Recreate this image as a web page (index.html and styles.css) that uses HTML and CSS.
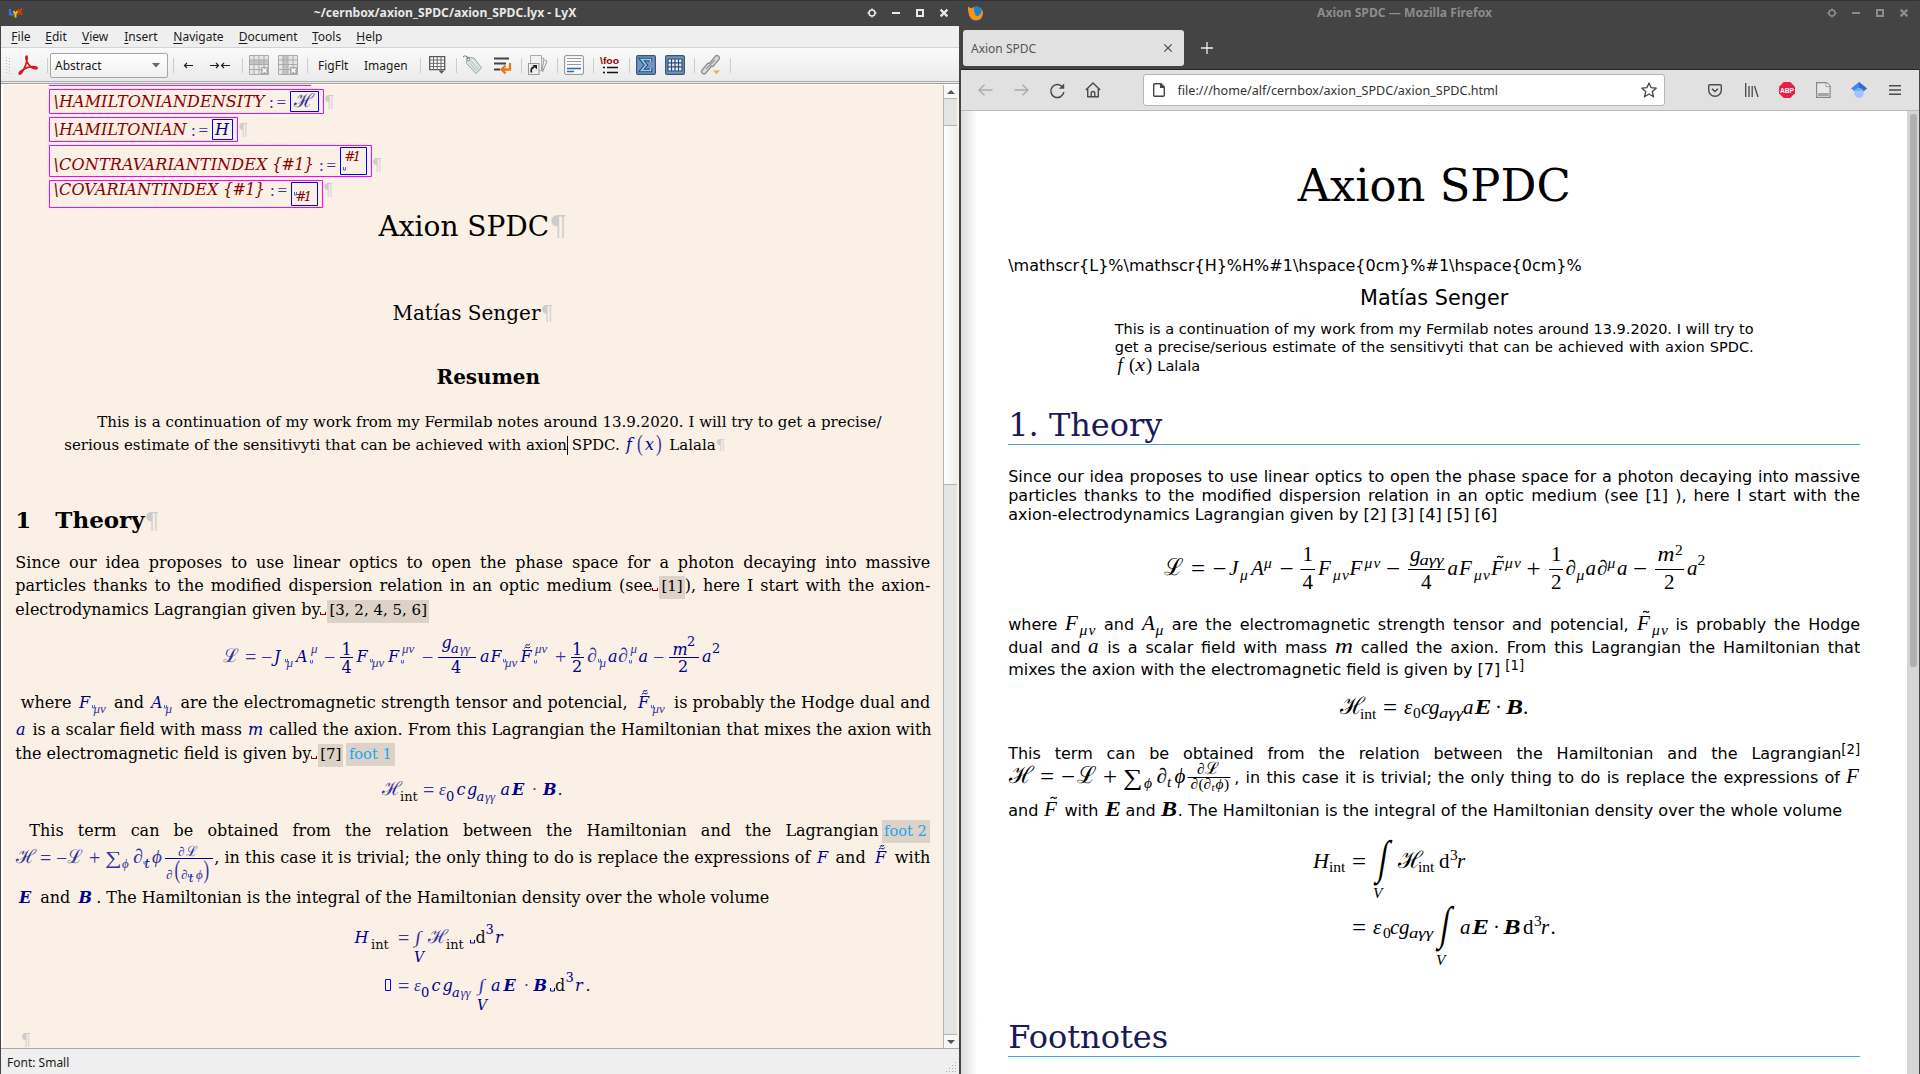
FILE: index.html
```html
<!DOCTYPE html>
<html lang="en">
<head>
<meta charset="utf-8">
<title>Axion SPDC</title>
<link rel="stylesheet" href="styles.css">
</head>
<body>
<svg class="defs" width="0" height="0">
  <symbol id="u" overflow="visible"><path d="M.5 0v3h2v-3" fill="none" stroke="#4169e1"/></symbol>
  <symbol id="sp" overflow="visible"><path d="M.5 0v3h4v-3" fill="none" stroke="#00008b"/></symbol>
  <symbol id="tl" overflow="visible"><path d="M.3 4.800q1.400-2 3-.8t3-.8M1.500 2.300q.8-2 2-.9t2.200-1" fill="none" stroke="#00008b"/></symbol>
  <symbol id="winbtns" viewBox="0 0 84 12">
    <circle cx="6" cy="6" r="3" fill="none" stroke="currentColor" stroke-width="1.6"/>
    <path d="M6 1.500v1M6 9.500v1M1.500 6h1M9.500 6h1" stroke="currentColor" stroke-width="1.6"/>
    <path d="M26 6h8" stroke="currentColor" stroke-width="2"/>
    <rect x="51" y="3" width="6" height="6" fill="none" stroke="currentColor" stroke-width="2"/>
    <path d="M74.600 2.600l6.800 6.800M81.400 2.600l-6.800 6.800" stroke="currentColor" stroke-width="2.2"/>
  </symbol>
</svg>

<section class="win lyx">
  <header class="titlebar">
    <svg width="14" height="10" viewBox="0 0 14 10"><path d="M1 1v5.500h4" fill="none" stroke="#2a7de1" stroke-width="2.200"/><path d="M4.500 3l2 3 2-3M6.500 6v3.500" fill="none" stroke="#f5c400" stroke-width="2"/><path d="M9 1l4 6M13 .5l-4 6.500" stroke="#c8400a" stroke-width="2"/></svg>
    <span class="wtitle">~/cernbox/axion_SPDC/axion_SPDC.lyx - LyX</span>
    <svg class="btns" width="84" height="12"><use href="#winbtns"/></svg>
  </header>
  <nav class="menubar">
    <span><u>F</u>ile</span><span><u>E</u>dit</span><span><u>V</u>iew</span><span><u>I</u>nsert</span><span><u>N</u>avigate</span><span><u>D</u>ocument</span><span><u>T</u>ools</span><span><u>H</u>elp</span>
  </nav>
  <div class="toolbar">
    <svg width="5" height="17" viewBox="0 0 5 17"><path d="M.5 0v17M3.500 1v16" stroke="#b5b5b5" stroke-dasharray="1 2"/></svg>
    <svg width="20" height="20" viewBox="0 0 20 20"><path d="M8.600 1c-1.400.4-.6 4 .6 6.200 1.600 3.200 5 6.400 8.600 6.600 1.800.1 1.800-1.500-.2-1.900-4-.8-9.400.7-13 3C2 16.400.6 18.500 1.400 19c1.400.6 4-3.600 5.800-7.800C8.600 8 10 1.200 8.600 1z" fill="none" stroke="#d9161c" stroke-width="1.700"/></svg>
    <i class="sep"></i>
    <div class="combo"><span>Abstract</span><svg width="8" height="5" viewBox="0 0 8 5"><path d="M0 0h8l-4 4.500z" fill="#666"/></svg></div>
    <i class="sep"></i>
    <svg width="10" height="8" viewBox="0 0 10 8"><path d="M10 4.500H2M4 2L1.500 4.500 4 7" fill="none" stroke="#222" stroke-width="1.200"/></svg>
    <svg width="20" height="8" viewBox="0 0 20 8"><path d="M0 4.500h8M6 2L8.500 4.500 6 7M20 4.500h-8M14 2L11.500 4.500 14 7" fill="none" stroke="#222" stroke-width="1.200"/></svg>
    <i class="sep"></i>
    <svg width="20" height="20" viewBox="0 0 20 20"><path d="M.5 .5h19v19H.5z" fill="#e6e6e6" stroke="#aaa"/><path d="M1 5h18v4H1z" fill="#c4c4c4"/><path d="M0 5h20M0 9.500h20M0 14.500h20M5 0v20M10 0v20M15 0v20" stroke="#aaa"/><rect x="12" y="12" width="7" height="7" fill="#aaa"/><path d="M13.500 13.500l4 4M17.500 13.500l-4 4" stroke="#fff" stroke-width="1.500"/></svg>
    <svg width="20" height="20" viewBox="0 0 20 20"><path d="M.5 .5h19v19H.5z" fill="#e6e6e6" stroke="#aaa"/><path d="M5 1h5v18H5z" fill="#c4c4c4"/><path d="M0 5h20M0 9.500h20M0 14.500h20M5 0v20M10 0v20M15 0v20" stroke="#aaa"/><rect x="12" y="12" width="7" height="7" fill="#aaa"/><path d="M13.500 13.500l4 4M17.500 13.500l-4 4" stroke="#fff" stroke-width="1.500"/></svg>
    <i class="sep"></i>
    <span>FigFlt</span>
    <span>Imagen</span>
    <i class="sep"></i>
    <svg width="17" height="18" viewBox="0 0 17 18"><path d="M.7 .7h15v13H.7z" fill="#fff" stroke="#555" stroke-width="1.300"/><path d="M0 4h16M0 7.300h16M0 10.600h16M4.500 0v14M8.200 0v14M12 0v14" stroke="#666"/><path d="M9.500 14.500h6l-3 3.200z" fill="#555"/></svg>
    <i class="sep"></i>
    <svg width="20" height="20" viewBox="0 0 20 20"><path d="M4 2l7 1 7.500 10-5.500 5.500L3.500 8.500z" fill="#dfe5e5" stroke="#98a3a6"/><path d="M8 6l8 9M6.500 8l7 8" stroke="#a9bcc4"/><circle cx="5.500" cy="4.500" r="1.300" fill="#fff" stroke="#777"/><path d="M0 2q3-3 5.500 2" fill="none" stroke="#777"/></svg>
    <svg width="20" height="20" viewBox="0 0 20 20"><path d="M1 3.500h15M1 8.500h12M1 14.500h6" stroke="#444" stroke-width="2.200"/><path d="M17 8v6.500H9M12.500 10.500L8.500 14.500l4 3.800" fill="none" stroke="#e07b16" stroke-width="2.300"/></svg>
    <i class="sep"></i>
    <svg width="20" height="20" viewBox="0 0 20 20"><path d="M2.500 .5h11v15h-11z" fill="#f2f2f2" stroke="#aaa"/><path d="M14 3l2 .5-2 13M16.500 5l2.500 1-4.500 11" fill="none" stroke="#999"/><rect x=".5" y="8.500" width="10.500" height="11" fill="#eee" stroke="#999"/><path d="M3.500 17.500q-1.500-4.500 3-5.500" fill="none" stroke="#222" stroke-width="1.800"/><path d="M4.500 10h4.500v4.500z" fill="#222"/></svg>
    <i class="sep"></i>
    <svg width="20" height="20" viewBox="0 0 20 20"><rect x=".6" y=".6" width="18.800" height="18.800" rx="1.500" fill="#fbfbfb" stroke="#8d8d8d"/><path d="M3 3.500h14M3 6.500h14M3 9.500h14" stroke="#999" stroke-width="1.200"/><path d="M3 13.500h14M3 16.500h7" stroke="#3465a4" stroke-width="1.500"/></svg>
    <i class="sep"></i>
    <svg width="20" height="20" viewBox="0 0 20 20"><text x="0" y="8.500" class="foo" textLength="19" lengthAdjust="spacingAndGlyphs">\foo</text><path d="M3 12.500h2M3 17.500h2M7 12.500h11M7 17.500h11" stroke="#111" stroke-width="1.600"/></svg>
    <i class="sep"></i>
    <svg width="20" height="20" viewBox="0 0 20 20"><rect x=".6" y=".6" width="18.800" height="18.800" rx="1.500" fill="#7395bb" stroke="#34557c" stroke-width="1.200"/><path d="M14.500 7V4.500h-9L10 10l-4.500 5.500h9V13" fill="none" stroke="#234a78" stroke-width="3.600"/><path d="M14.500 7V4.500h-9L10 10l-4.500 5.500h9V13" fill="none" stroke="#8fd0f5" stroke-width="1.600"/></svg>
    <svg width="20" height="20" viewBox="0 0 20 20"><rect x=".6" y=".6" width="18.800" height="18.800" rx="1.500" fill="#7395bb" stroke="#34557c" stroke-width="1.200"/><path d="M3 4h14v12H3z" fill="#e8eef6" stroke="#2c4b7c" stroke-width="1.200"/><path d="M3 7.800h14M3 11.800h14M6.500 4v12M10 4v12M13.500 4v12" stroke="#2c4b7c" stroke-width="1.200"/></svg>
    <i class="sep"></i>
    <svg width="20" height="20" viewBox="0 0 20 20"><path d="M3 16.500l5-6M11 9l5-6" stroke="#8f8f8f" stroke-width="6" stroke-linecap="round"/><path d="M3 16.500l5-6M11 9l5-6" stroke="#dcdcdc" stroke-width="3.500" stroke-linecap="round"/><path d="M5 14l9-9" stroke="#999" stroke-width="1.300"/><path d="M12 15.500h7l-3.500 3.800z" fill="#f2a95c"/></svg>
    <i class="sep"></i>
  </div>
  <div class="workarea">
    <article class="doc">
      <svg class="macros" width="345" height="127" viewBox="49 83 345 127">
        <g fill="none" stroke="#f0f"><path d="M49 85.500h262M49.500 89.500h274v24h-274zM49.500 117.500h188v24h-188zM49.500 145.500h322v31h-322zM49.500 180.500h273v27h-273z"/></g>
        <g fill="none" stroke="#00f"><path d="M290.500 91.500h28v20h-28zM212.500 119.500h20v20h-20zM340.500 147.500h26v27h-26zM291.500 182.500h26v23h-26z"/></g>
        <g class="r"><text x="53.500" y="107" textLength="211">\HAMILTONIANDENSITY</text><text x="53.500" y="135" textLength="133">\HAMILTONIAN</text><text x="53.500" y="170" textLength="214">\CONTRAVARIANTINDEX</text><text x="272" y="170" textLength="42">{#1}</text><text x="53.500" y="195" textLength="165">\COVARIANTINDEX</text><text x="223" y="195" textLength="42">{#1}</text></g>
        <g class="r s"><text x="344.500" y="161" textLength="16.500">#1</text><text x="295.500" y="201" textLength="16.500">#1</text></g>
        <g class="t"><text class="up-r" x="269" y="108" textLength="17">:=</text><text class="up-r" x="191" y="136" textLength="17">:=</text><text class="up-r" x="319" y="171" textLength="17">:=</text><text class="up-r" x="270" y="196" textLength="17">:=</text><text class="scr" x="294" y="107">ℋ</text></g>
        <text class="i" x="215" y="135">H</text>
        <use href="#u" x="343" y="167"/><use href="#u" x="294" y="192"/>
        <g class="pil"><text x="324" y="107">¶</text><text x="238" y="135">¶</text><text x="372" y="170">¶</text><text x="323" y="195">¶</text></g>
      </svg>
      <h1 class="l-title">Axion SPDC<b class="pil">¶</b></h1>
      <p class="l-author">Matías Senger<b class="pil">¶</b></p>
      <h3 class="l-resumen">Resumen</h3>
      <p class="l-abs first">This is a continuation of my work from my Fermilab notes around 13.9.2020. I will try to get a precise/</p>
      <p class="l-abs">serious estimate of the sensitivyti that can be achieved with axion<i class="caret"></i> SPDC. <svg class="m" width="40" height="10" viewBox="626 441 40 10"><text class="i" x="627" y="451">f</text><text class="i" x="646" y="451" font-size="15">x</text><g class="t"><text class="up-r" transform="translate(638 452) scale(1 1.350)">(</text><text class="up-r" transform="translate(657 452) scale(1 1.350)">)</text></g></svg> Lalala<b class="pil">¶</b></p>
      <h2 class="l-section"><span>1</span>Theory<b class="pil">¶</b></h2>
      <p class="j">Since our idea proposes to use linear optics to open the phase space for a photon decaying into massive</p>
      <p class="j">particles thanks to the modified dispersion relation in an optic medium (see<i class="nbsp"></i><span class="cite">[1]</span>), here I start with the axion-</p>
      <p>electrodynamics Lagrangian given by<i class="nbsp"></i><span class="cite">[3, 2, 4, 5, 6]</span></p>
      <svg class="eq" width="915" height="69" viewBox="15 621 915 69">
        <g class="i"><text x="274" y="662">J</text><text x="296" y="662">A</text><text x="356.500" y="662">F</text><text x="388" y="662">F</text><text x="441.500" y="648">g</text><text x="480" y="662">a</text><text x="490.500" y="662">F</text><text x="520.500" y="662">F</text><text x="608" y="662">a</text><text x="638.500" y="662">a</text><text x="672.500" y="655">m</text><text x="702" y="662">a</text></g>
        <g class="n"><text x="341.500" y="655">1</text><text x="341.500" y="673">4</text><text x="451" y="673">4</text><text x="572" y="655">1</text><text x="572" y="672">2</text><text x="678" y="672">2</text></g>
        <g class="n s"><text x="687" y="646">2</text><text x="712" y="653">2</text></g><text class="i s" x="451" y="653">a</text>
        <g class="t"><text class="scr" x="223" y="662">ℒ</text><text x="245" y="664" class="op">=</text><text x="261" y="664" class="op">−</text><text x="324" y="664" class="op">−</text><text x="422" y="664" class="op">−</text><text x="555" y="664" class="op">+</text><text x="653" y="664" class="op">−</text><text x="587" y="662" class="op">∂</text><text x="618" y="662" class="op">∂</text></g>
        <g class="t ts"><text x="286.500" y="667">μ</text><text x="311" y="653">μ</text><text x="372" y="667">μν</text><text x="402" y="653">μν</text><text x="460" y="653">γγ</text><text x="505" y="667">μν</text><text x="535" y="653">μν</text><text x="599.500" y="667">μ</text><text x="630.500" y="653">μ</text></g>
        <path d="M340 657.500h13M438 657.500h38M571 657.500h13M669 657.500h30" stroke="#00008b"/>
        <use href="#u" x="285" y="659"/><use href="#u" x="310" y="660"/><use href="#u" x="370" y="659"/><use href="#u" x="401" y="660"/><use href="#u" x="503" y="659"/><use href="#u" x="534" y="660"/><use href="#u" x="598" y="659"/><use href="#u" x="629" y="660"/><use href="#tl" x="524" y="643.500"/>
      </svg>
      <p class="j in5"><span>where</span> <svg class="m" width="32" height="10" viewBox="76 698 32 10"><text class="i" x="78" y="708">F</text><text class="t ts" x="92.500" y="713">μν</text><use href="#u" x="91" y="705"/></svg> and <svg class="m" width="26" height="10" viewBox="150 698 26 10"><text class="i" x="152" y="708">A</text><text class="t ts" x="166.500" y="713">μ</text><use href="#u" x="165" y="705"/></svg> are the electromagnetic strength tensor and potencial, <svg class="m" width="36" height="10" viewBox="633 698 36 10"><text class="i" x="638" y="708">F</text><text class="t ts" x="652.500" y="713">μν</text><use href="#u" x="651" y="705"/><use href="#tl" x="641.500" y="689.500"/></svg> is probably the Hodge dual and</p>
      <p class="j"><svg class="m" width="12" height="10" viewBox="15 0 12 10"><text class="i" x="16" y="10">a</text></svg> is a scalar field with mass <svg class="m" width="17" height="10" viewBox="0 0 17 10"><text class="i" x="1" y="10">m</text></svg> called the axion. From this Lagrangian the Hamiltonian that mixes the axion with</p>
      <p>the electromagnetic field is given by<i class="nbsp"></i><span class="cite">[7]</span><span class="cite foot">foot 1</span></p>
      <svg class="eq" width="915" height="49" viewBox="15 766 915 49">
        <g class="i"><text x="456.500" y="795">c</text><text x="467" y="795">g</text><text x="500.500" y="795">a</text><text x="512" y="795" class="b">E</text><text x="543" y="795" class="b">B</text></g>
        <g class="n s"><text x="400" y="801" class="k">int</text><text x="446" y="801">0</text></g><text class="i s" x="476.500" y="801">a</text><text class="n k" x="557.500" y="795">.</text>
        <g class="t"><text class="scr" x="382" y="795">ℋ</text><text x="423" y="797" class="op">=</text><text x="439" y="795">ε</text><text x="532" y="795">·</text><text x="485" y="801" class="ts">γγ</text></g>
      </svg>
      <p class="j in14"><span>This</span> term can be obtained from the relation between the Hamiltonian and the Lagrangian<span class="cite foot">foot 2</span></p>
      <p class="j"><svg class="m" width="199" height="10" viewBox="15 853 199 10">
        <g class="t"><text class="scr" x="16" y="863">ℋ</text><text class="op" x="40" y="865">=</text><text class="op" x="56" y="865">−</text><text class="scr" x="67" y="863">ℒ</text><text class="op" x="89" y="865">+</text><text class="up-r" transform="translate(105 864) scale(1.350 1.080)">∑</text><text class="op" x="133" y="863">∂</text><text x="152" y="863" font-size="19">ϕ</text><text x="122" y="868" class="ts">ϕ</text>
        <text x="178" y="856" class="ts">∂</text><text x="185.500" y="856" class="scr ss">ℒ</text><text x="166" y="879" class="ts">∂</text><text x="181" y="879" class="ts">∂</text><text x="196" y="879" class="ts">ϕ</text><text class="up-r" transform="translate(174.500 878) scale(1 1.450)">(</text><text class="up-r" transform="translate(203.500 878) scale(1 1.450)">)</text></g>
        <text class="i s" x="144.500" y="868">t</text><text class="i xt" x="189" y="882">t</text><use href="#u" x="143.500" y="861"/><use href="#u" x="188" y="874"/><path d="M165 858.500h48" stroke="#00008b"/></svg>, in this case it is trivial; the only thing to do is replace the expressions of <svg class="m" width="15" height="10" viewBox="816 0 15 10"><text class="i" x="818" y="10">F</text></svg> and <svg class="m" width="19" height="10" viewBox="871 853 19 10"><text class="i" x="875" y="863">F</text><use href="#tl" x="878.500" y="844.500"/></svg> with</p>
      <p class="tight"><svg class="m" width="20" height="10" viewBox="15 0 20 10"><text class="i b" x="19" y="10">E</text></svg> and <svg class="m" width="21" height="10" viewBox="75 0 21 10"><text class="i b" x="78.500" y="10">B</text></svg>. The Hamiltonian is the integral of the Hamiltonian density over the whole volume</p>
      <svg class="eq" width="915" height="111" viewBox="15 909 915 111">
        <g class="i"><text x="354.500" y="943">H</text><text x="495" y="943">r</text><text class="v" x="414" y="962">V</text><text x="431.500" y="991">c</text><text x="442.500" y="991">g</text><text class="v" x="477" y="1010">V</text><text x="491" y="991">a</text><text class="b" x="503.500" y="991">E</text><text class="b" x="533.500" y="991">B</text><text x="575" y="991">r</text></g>
        <g class="n s"><text class="k" x="371" y="949">int</text><text class="k" x="446" y="949">int</text><text x="485.500" y="934">3</text><text x="421" y="997">0</text><text x="565.500" y="982">3</text></g><text class="i s" x="452" y="997">a</text>
        <g class="n k"><text x="475.500" y="943">d</text><text x="555" y="991">d</text><text x="585.500" y="991">.</text></g>
        <g class="t"><text class="op" x="398" y="945">=</text><text class="up-r" transform="translate(414.500 943) skewX(-8) scale(1.200 1)">∫</text><text class="scr" x="428" y="943">ℋ</text><text class="op" x="398" y="993">=</text><text x="414" y="991">ε</text><text x="460.500" y="997" class="ts">γγ</text><text class="up-r" transform="translate(478 991) skewX(-8) scale(1.200 1)">∫</text><text x="524" y="991">·</text></g>
        <use href="#sp" x="470" y="940"/><use href="#sp" x="550" y="988"/><path d="M385.500 979.500h5v11h-5z" fill="none" stroke="#00f"/>
      </svg>
      <p class="in5"><b class="pil">¶</b></p>
    </article>
    <div class="vscroll"><i class="up"></i><i class="gap"></i><i class="thumb"></i><i class="trough"></i><i class="down"></i></div>
  </div>
  <footer class="status"><span>Font: Small</span><svg width="11" height="11" viewBox="0 0 11 11"><path d="M9.500 0v11M6.500 3v8M3.500 6v5M.5 9v2" stroke="#aaa" stroke-dasharray="1 2"/></svg></footer>
</section>

<section class="win ff">
  <header class="titlebar">
    <svg width="16" height="15" viewBox="0 0 16 15"><circle cx="8" cy="7.500" r="7" fill="#f59320"/><path d="M5 1.500Q10-1 13.500 3q.5 5-3.500 7-4-.5-3-3-2-2-2-5.500z" fill="#1784cf"/><path d="M0 .5l3 2 3.500 0-1 3 2 2-2 2q1.500 2.500 5.500 1-2 4-7 2Q-.5 9 0 .5z" fill="#f59320"/></svg>
    <span class="wtitle">Axion SPDC — Mozilla Firefox</span>
    <svg class="btns" width="84" height="12"><use href="#winbtns"/></svg>
  </header>
  <div class="tabs">
    <div class="tab"><span>Axion SPDC</span><svg width="8" height="8" viewBox="0 0 8 8"><path d="M.3 .3l7.400 7.400M7.700 .3L.3 7.700" stroke="#444" stroke-width="1.100"/></svg></div>
    <svg width="12" height="12" viewBox="0 0 12 12"><path d="M6 0v12M0 6h12" stroke="#eee" stroke-width="1.300"/></svg>
  </div>
  <div class="nav">
    <svg width="15" height="12" viewBox="0 0 15 12"><path d="M14.500 6H1M6.500 .8L1 6l5.500 5.200" fill="none" stroke="#aaa" stroke-width="1.300"/></svg>
    <svg width="15" height="12" viewBox="0 0 15 12"><path d="M.5 6H14M8.500 .8L14 6l-5.500 5.200" fill="none" stroke="#aaa" stroke-width="1.300"/></svg>
    <svg width="15" height="15" viewBox="0 0 15 15"><path d="M12.800 4.500A6.500 6.500 0 1 0 13.800 9" fill="none" stroke="#4a4a4a" stroke-width="1.500"/><path d="M14.200 .5v5.300H8.900z" fill="#4a4a4a"/></svg>
    <svg width="16" height="16" viewBox="0 0 16 16"><path d="M.8 8L8 1l7.200 7M2.700 6.500v8.300h10.600V6.500M6.200 14.800v-3.500q0-1.800 1.800-1.800t1.800 1.800v3.500" fill="none" stroke="#4a4a4a" stroke-width="1.400" stroke-linejoin="round"/></svg>
    <div class="url">
      <svg width="12" height="14" viewBox="0 0 12 14"><path d="M2 .7h6L11.300 4v8q0 1.300-1.300 1.300H2Q.7 13.300.7 12V2Q.7.7 2 .7z" fill="none" stroke="#444" stroke-width="1.400"/><path d="M7 0l5 5H7z" fill="#444"/></svg>
      <span>file:///home/alf/cernbox/axion_SPDC/axion_SPDC.html</span>
      <svg width="16" height="16" viewBox="0 0 16 16"><path d="M8 1l2.100 4.700 5.100.5-3.900 3.400 1.200 5.200L8 12l-4.500 2.800 1.200-5.200L.8 6.200l5.100-.5z" fill="none" stroke="#444" stroke-width="1.300" stroke-linejoin="round"/></svg>
    </div>
    <svg width="14" height="13" viewBox="0 0 14 13"><path d="M1.800.7h10.400q1.100 0 1.100 1.100V6a6.300 6.300 0 0 1-12.600 0V1.800Q.7.7 1.800.7z" fill="none" stroke="#4a4a4a" stroke-width="1.400"/><path d="M4 4.700l3 2.800 3-2.800" fill="none" stroke="#4a4a4a" stroke-width="1.500"/></svg>
    <svg width="14" height="14" viewBox="0 0 14 14"><path d="M.7 0v14M4 3v11M7.200 3v11M9.500 3l3.500 11" stroke="#4a4a4a" stroke-width="1.300"/></svg>
    <svg width="16" height="16" viewBox="0 0 16 16"><path d="M4.700 0h6.600L16 4.700v6.600L11.300 16H4.700L0 11.300V4.700z" fill="#ed1e45"/><text class="abp" x="1" y="11" textLength="14" lengthAdjust="spacingAndGlyphs">ABP</text></svg>
    <svg width="15" height="16" viewBox="0 0 15 16"><path d="M.6 .6h10l3.500 3.500v11.300H.6z" fill="#e8e8e8" stroke="#888" stroke-width="1.200"/><path d="M10 .6v4h4" fill="#fff" stroke="#999"/><path d="M2.500 11.500h10v2h-10z" fill="#aaa" stroke="#888" stroke-width=".6"/></svg>
    <svg width="16" height="16" viewBox="0 0 16 16"><path d="M8 0L0 6.500l4 3h8l4-3z" fill="#4285f4"/><path d="M8 0l8 6.500-4 3L8 6z" fill="#356ac3"/><circle cx="8" cy="11" r="4.800" fill="#a0c3ff"/><path d="M3.700 8.800a4.800 4.800 0 0 1 8.600 0z" fill="#76a7fa"/></svg>
    <svg width="12" height="10" viewBox="0 0 12 10"><path d="M0 .7h12M0 5h12M0 9.300h12" stroke="#4a4a4a" stroke-width="1.400"/></svg>
  </div>
  <div class="view">
    <article class="page">
      <h1>Axion SPDC</h1>
      <p>\mathscr{L}%\mathscr{H}%H%#1\hspace{0cm}%#1\hspace{0cm}%</p>
      <p class="author">Matías Senger</p>
      <p class="abs j">This is a continuation of my work from my Fermilab notes around 13.9.2020. I will try to</p>
      <p class="abs j">get a precise/serious estimate of the sensitivyti that can be achieved with axion SPDC.</p>
      <p class="abs"><svg class="m" width="38" height="10" viewBox="1114 361 38 10"><g class="x fx"><text x="1116.500" y="371">f</text><text x="1134.500" y="371" textLength="9.500" lengthAdjust="spacingAndGlyphs">x</text></g><g class="y fx"><text x="1128" y="371">(</text><text x="1145" y="371">)</text></g></svg> Lalala</p>
      <h2>1. Theory</h2>
      <p class="j">Since our idea proposes to use linear optics to open the phase space for a photon decaying into massive</p>
      <p class="j">particles thanks to the modified dispersion relation in an optic medium (see [1] ), here I start with the</p>
      <p>axion-electrodynamics Lagrangian given by [2] [3] [4] [5] [6]</p>
      <svg class="eq" width="852" height="74" viewBox="1008 526 852 74">
        <g class="x"><text x="1229" y="575">J</text><text x="1251" y="575">A</text><text x="1318" y="575">F</text><text x="1349.500" y="575">F</text><text x="1410" y="561">g</text><text x="1447.500" y="575">a</text><text x="1459" y="575">F</text><text x="1491" y="575">F</text><text x="1565.500" y="575">∂</text><text x="1585.500" y="575">a</text><text x="1597" y="575">∂</text><text x="1617" y="575">a</text><text x="1657.500" y="561" textLength="17" lengthAdjust="spacingAndGlyphs">m</text><text x="1687" y="575">a</text></g>
        <g class="x xs"><text x="1240" y="580">μ</text><text x="1264" y="568">μ</text><text x="1333" y="580" textLength="16">μν</text><text x="1364.500" y="568" textLength="16">μν</text><text x="1419.500" y="565" textLength="24" lengthAdjust="spacingAndGlyphs">aγγ</text><text x="1474" y="580" textLength="16">μν</text><text x="1505" y="568" textLength="16">μν</text><text x="1576.500" y="580">μ</text><text x="1607.500" y="568">μ</text></g>
        <g class="y"><text class="scr" x="1164" y="575">ℒ</text><text class="op" x="1191" y="577">=</text><text class="op" x="1212.500" y="577">−</text><text class="op" x="1279.500" y="577">−</text><text class="op" x="1386" y="577">−</text><text class="op" x="1526.500" y="577">+</text><text class="op" x="1633" y="577">−</text><text x="1302.500" y="561">1</text><text x="1302.500" y="589">4</text><text x="1421" y="589">4</text><text x="1551" y="561">1</text><text x="1551" y="589">2</text><text x="1664" y="589">2</text></g>
        <g class="y xs"><text x="1675" y="555">2</text><text x="1697.500" y="565">2</text></g>
        <path d="M1300.500 569.500h14.500M1408 569.500h37M1549 569.500h14M1655 569.500h29" stroke="#000"/><path class="acc" d="M1497 557.500q1.700-2 3.200-.7t3-.7"/>
      </svg>
      <p class="j">where <svg class="m" width="31" height="10" viewBox="1066 620 31 10"><text class="x" x="1066" y="630">F</text><text class="x xs" x="1080.500" y="635" textLength="16">μν</text></svg> and <svg class="m" width="22" height="10" viewBox="1143 620 22 10"><text class="x" x="1143" y="630">A</text><text class="x xs" x="1156.500" y="635">μ</text></svg> are the electromagnetic strength tensor and potencial, <svg class="m" width="31" height="10" viewBox="1636 620 31 10"><text class="x" x="1636" y="630">F</text><text class="x xs" x="1651" y="635" textLength="16">μν</text><path class="acc" d="M1642 612.500q1.700-2 3.200-.7t3-.7"/></svg> is probably the Hodge</p>
      <p class="j">dual and <svg class="m" width="11" height="10" viewBox="0 0 11 10"><text class="x" x="0" y="10">a</text></svg> is a scalar field with mass <svg class="m" width="18" height="10" viewBox="0 0 18 10"><text class="x" x="0" y="10" textLength="18" lengthAdjust="spacingAndGlyphs">m</text></svg> called the axion. From this Lagrangian the Hamiltonian that</p>
      <p>mixes the axion with the electromagnetic field is given by [7] <sup>[1]</sup></p>
      <svg class="eq" width="852" height="48" viewBox="1008 682 852 48">
        <g class="x"><text x="1404" y="714">ε</text><text x="1421" y="714">c</text><text x="1429" y="714">g</text><text x="1463" y="714">a</text><text class="b" x="1474.500" y="714" textLength="17" lengthAdjust="spacingAndGlyphs">E</text><text class="b" x="1506" y="714" textLength="17" lengthAdjust="spacingAndGlyphs">B</text><text class="xs" x="1439" y="718" textLength="24" lengthAdjust="spacingAndGlyphs">aγγ</text></g>
        <g class="y"><text class="scr" x="1340" y="714">ℋ</text><text class="xs" x="1360" y="719">int</text><text class="op" x="1383" y="716">=</text><text class="xs" x="1413" y="718">0</text><text x="1495" y="714">·</text><text x="1523" y="714">.</text></g>
      </svg>
      <p class="j">This term can be obtained from the relation between the Hamiltonian and the Lagrangian<sup>[2]</sup></p>
      <p class="j"><svg class="m" width="226" height="10" viewBox="1008 773 226 10">
        <g class="y"><text class="scr" x="1009" y="783">ℋ</text><text class="op" x="1040" y="785">=</text><text class="op" x="1061" y="785">−</text><text class="scr" x="1077" y="783">ℒ</text><text class="op" x="1103" y="785">+</text><text transform="translate(1123 784.500) scale(1.300 1.080)">∑</text><text class="scr ss" x="1204.500" y="774">ℒ</text><text class="xs" x="1198.500" y="788.500">(</text><text class="xs" x="1224" y="788.500">)</text></g>
        <g class="x"><text x="1156.500" y="783">∂</text><text x="1174.500" y="783">ϕ</text></g><g class="x xs"><text x="1144" y="788">ϕ</text><text x="1167" y="787">t</text><text x="1197" y="774">∂</text><text x="1190.500" y="789">∂</text><text x="1203.500" y="789">∂</text><text class="xt" x="1211.500" y="791">t</text><text x="1215.500" y="789">ϕ</text></g><path d="M1187.500 777.500h43" stroke="#000"/></svg>, in this case it is trivial; the only thing to do is replace the expressions of <svg class="m" width="14" height="10" viewBox="0 0 14 10"><text class="x" x="0" y="10">F</text></svg></p>
      <p>and <svg class="m" width="16" height="10" viewBox="1043 806 16 10"><text class="x" x="1044" y="816">F</text><path class="acc" d="M1050.500 798.500q1.700-2 3.200-.7t3-.7"/></svg> with <svg class="m" width="17" height="10" viewBox="0 0 17 10"><text class="x b" x="1" y="10" textLength="16" lengthAdjust="spacingAndGlyphs">E</text></svg> and <svg class="m" width="17" height="10" viewBox="0 0 17 10"><text class="x b" x="0" y="10" textLength="16" lengthAdjust="spacingAndGlyphs">B</text></svg>. The Hamiltonian is the integral of the Hamiltonian density over the whole volume</p>
      <svg class="eq" width="852" height="147" viewBox="1008 823 852 147">
        <g class="x"><text x="1313" y="868" textLength="16" lengthAdjust="spacingAndGlyphs">H</text><text x="1457" y="868">r</text><text class="xs" x="1373" y="898">V</text><text x="1373" y="934">ε</text><text x="1390" y="934">c</text><text x="1399" y="934">g</text><text class="xs" x="1409" y="938" textLength="24" lengthAdjust="spacingAndGlyphs">aγγ</text><text class="xs" x="1436" y="965">V</text><text x="1460" y="934">a</text><text class="b" x="1472" y="934" textLength="17" lengthAdjust="spacingAndGlyphs">E</text><text class="b" x="1503.500" y="934" textLength="17" lengthAdjust="spacingAndGlyphs">B</text><text x="1541" y="934">r</text></g>
        <g class="y"><text class="op" x="1352" y="870">=</text><text transform="translate(1377 873) skewX(-9) scale(1.500 2.220)">∫</text><text class="scr" x="1398" y="868">ℋ</text><text x="1439" y="868">d</text><text class="op" x="1352" y="936">=</text><text transform="translate(1439 939) skewX(-9) scale(1.500 2.220)">∫</text><text x="1493" y="934">·</text><text x="1523" y="934">d</text><text x="1550.500" y="934">.</text></g>
        <g class="y xs"><text x="1329" y="872">int</text><text x="1418" y="872">int</text><text x="1450" y="860">3</text><text x="1383" y="938">0</text><text x="1534" y="926">3</text></g>
      </svg>
      <h2>Footnotes</h2>
    </article>
    <div class="rail"><i></i></div>
  </div>
</section>
</body>
</html>
```
FILE: styles.css
```css
* { box-sizing: border-box; margin: 0; padding: 0; }
body { display: flex; width: 1920px; height: 1074px; overflow: hidden; background: #444; font: 12px/16px "Noto Sans", sans-serif; color: #1a1a1a; }
.defs { position: absolute; }
svg { overflow: visible; display: block; }
u { text-decoration-thickness: 1px; text-underline-offset: 2px; }

.win { width: 960px; height: 1074px; display: flex; flex-direction: column; overflow: hidden; border-left: 1px solid #444; border-right: 1px solid #444; }
.titlebar { height: 26px; flex: none; display: grid; grid-template-columns: 63px 1fr 133px; align-items: center; background: #444; color: #e8e8e8; border-top: 1px solid #333; padding: 0 8px 1px; }
.wtitle { text-align: center; font-weight: bold; font-size: 12.150px; white-space: nowrap; }
.titlebar .btns { justify-self: end; margin-right: 1px; }
.ff .titlebar { color: #8c8c8c; padding-left: 7px; }

/* LyX window */
.menubar { height: 22px; flex: none; display: grid; grid-template-columns: 34px 36.700px 42.300px 49px 65.400px 73.300px 44.300px 60px; padding: 3px 0 0 10.300px; background: #efefef; border-bottom: 1px solid #d2d2d2; }
.toolbar { height: 37px; flex: none; display: grid; grid-template-columns: 12px 29px 3px 123px 10px 27px 32px 7px 29px 29px 11px 46px 56px 9px 27px 7px 30px 28px 7px 29px 7px 29px 7px 29px 7px 29px 29px 7px 29px 3px; align-items: center; padding: 0 0 3px 5px; background: linear-gradient(#fafafa, #ebebeb 33px, #a9a9a9 33px, #a9a9a9 34px, #f0f0f0 34px, #f0f0f0 35px, #9c9c9c 35px, #9c9c9c 36px, #fff 36px); }
.toolbar span { padding-top: 1px; }
.sep { width: 1px; height: 15px; background: #ccc; }
.combo { width: 118px; height: 25px; display: flex; align-items: center; justify-content: space-between; padding: 0 7px 0 4px; border: 1px solid #a5a5a5; border-radius: 2px; background: linear-gradient(#fff, #f0f0f0); }
.foo { font: bold 8.500px "Liberation Sans", sans-serif; fill: #8b0000; }
.workarea { flex: none; height: 963px; display: flex; border-left: 2px solid #fff; background: #faf0e6; overflow: hidden; }
.doc { width: 940px; height: 963px; flex: none; display: grid; align-items: end; overflow: hidden; padding: 0 12.700px 0 12.300px;
  grid-template-rows: 123px 31px 86px 64px 45px 23px 75px 43px 23px 24px 68px 25px 27px 24px 49px 28px 27px 40px 110px 32px;
  font: 16px/24px "DejaVu Serif", serif; color: #000; white-space: nowrap; }
.doc > *, .page > * { height: 24px; min-width: 0; }
.doc > .eq, .page > .eq { height: auto; }
.doc > .macros { height: 127px; margin: 0 0 -2px 33.700px; }
.j { text-align: justify; text-align-last: justify; }
.tight { word-spacing: -.15px; }
.m { display: inline-block; vertical-align: baseline; }
.pil { color: #ccc; fill: #ccc; font-weight: normal; }
.doc .l-title { font-size: 28px; font-weight: normal; text-align: center; }
.doc .l-author { font-size: 20px; text-align: center; }
.doc .l-resumen { font-size: 20px; text-align: center; padding-left: 31px; }
.doc .l-abs { font-size: 15px; padding-left: 49px; }
.doc .l-abs.first { padding-left: 82px; word-spacing: .1px; }
.doc .l-section { font-size: 23px; }
.l-section span { display: inline-block; width: 40px; }
.in5 > :first-child { padding-left: 5.500px; }
.in14 > :first-child { padding-left: 14px; }
.caret { display: inline-block; width: 1px; height: 19px; margin: -6px -1px 0 0; vertical-align: -5px; background: #000; }
.nbsp { display: inline-block; width: 6px; height: 3px; margin: 0 1px 0 0; border: solid #8b0000; border-width: 0 1px 1px; }
.cite { display: inline-block; height: 23px; line-height: 21px; margin: -8px 0; padding: 0 2px; background: #dcd2c8; font-size: 15px; }
.foot { color: #1aa7ee; font-size: 14.600px; padding: 0 3.500px 0 2.500px; margin-left: 3px; }
.i { font: italic 16px "DejaVu Serif", serif; fill: #00008b; }
.n { font: 16px "DejaVu Serif", serif; fill: #00008b; }
.i.s, .n.s { font-size: 13px; }
.i .v { font-size: 14px; }
.i.xt { font-size: 11px; }
.b { font-weight: bold; }
.k { fill: #111; }
.r { font: italic 16px "DejaVu Serif", serif; fill: #8b0000; }
.r.s { font-size: 13px; }
.t { font: italic 17px "Liberation Serif", serif; fill: #34349c; }
.t .ts, .ts { font-size: 13px; }
.t .up-r { font-style: normal; }
.t .op { font-style: normal; font-size: 20px; }
.t .scr { font-style: normal; font-size: 19px; }
.t .ss { font-size: 14px; }
svg.macros .pil { font: 16px "DejaVu Serif", serif; }

.vscroll { width: 14px; height: 963px; display: flex; flex-direction: column; border-left: 1px solid #b4b4b4; background: #e4e4e4; }
.vscroll i { display: block; }
.vscroll .up, .vscroll .down { height: 14px; background: #f8f8f8; display: flex; align-items: center; justify-content: center; }
.up { border-bottom: 1px solid #b4b4b4; }
.down { border-top: 1px solid #b4b4b4; }
.up::after, .down::after { content: ""; border: 4px solid transparent; }
.up::after { border-bottom-color: #555; border-top-width: 0; }
.down::after { border-top-color: #555; border-bottom-width: 0; }
.gap { height: 26px; }
.thumb { height: 360px; background: linear-gradient(90deg, #fff, #efefef); border: solid #b4b4b4; border-width: 1px 0; }
.trough { flex: 1; }
.status { flex: 1; display: flex; justify-content: space-between; align-items: center; padding: 2px 0 0 6px; background: #efefef; border-top: 1px solid #a8a8a8; }
.status svg { align-self: end; margin: 0 2px 1px 0; }

/* Firefox window */
.tabs { height: 44px; flex: none; display: flex; align-items: center; gap: 17px; padding: 1px 0 0 2px; background: #444; border-bottom: 1px solid #262626; }
.tab { width: 221px; height: 36px; display: flex; align-items: center; justify-content: space-between; padding: 0 12px 0 8px; border-radius: 3px; background: #e1e1e1; color: #555; }
.tab span { padding-top: 1px; }
.nav { height: 41px; flex: none; display: grid; grid-template-columns: 36px 36px 35px 58px 565px 37px 34px 37px 35px 37.500px 12px; align-items: center; padding-left: 17px; background: #e1e1e1; border-bottom: 1px solid #b9b9b9; }
.url { width: 522px; height: 32px; display: flex; align-items: center; padding: 0 7px 0 9px; border: 1px solid #b5b5b5; border-radius: 3px; background: #fff; color: #333; font-size: 12.590px; }
.url span { flex: 1; padding: 1px 0 0 12.500px; }
.abp { font: bold 7.500px "Liberation Sans", sans-serif; fill: #fff; }
.view { flex: 1; display: flex; justify-content: space-between; min-height: 0; background: linear-gradient(90deg, #dcdcdc, #fff 16px); }
.page { padding-left: 47.200px; width: 899px; height: 963px; display: grid; align-items: end; overflow: hidden; white-space: nowrap;
  grid-template-rows: 87px 80px 32px 31px 18px 19px 67px 44px 19px 19px 73px 37px 23px 22px 48px 36px 24px 33px 147px 87px;
  font: 16px/24px "DejaVu Sans", sans-serif; color: #000; }
.page h1 { font: 44.800px/24px "DejaVu Serif", serif; text-align: center; }
.page .author { font-size: 20.750px; text-align: center; }
.page .abs { font-size: 14.500px; margin: 0 106.500px; }
.page h2 { height: 32px; font: 32px/24px "DejaVu Serif", serif; color: #1a1a58; border-bottom: 1px solid #4aa8d4; }
.page sup { font-size: 13.300px; line-height: 0; vertical-align: 5px; }
.x { font: italic 21px "Liberation Serif", serif; fill: #000; }
.x.b { font-weight: bold; }
.y { font: 21px "Liberation Serif", serif; fill: #000; }
.xs, .x .xs, .y .xs { font-size: 15.500px; }
.x .xt { font-size: 11px; }
.x.fx, .y.fx { font-size: 18.500px; }
.y .op { font-size: 25px; }
.y .scr { font-size: 23.500px; }
.y .ss { font-size: 17px; }
.acc { fill: none; stroke: #000; stroke-width: 1.200; }
.rail { width: 12px; padding: 3px 2px 0 3px; background: #d6d6d6; }
.rail i { display: block; height: 553px; border-radius: 3px; background: #b0b0b0; }
```
